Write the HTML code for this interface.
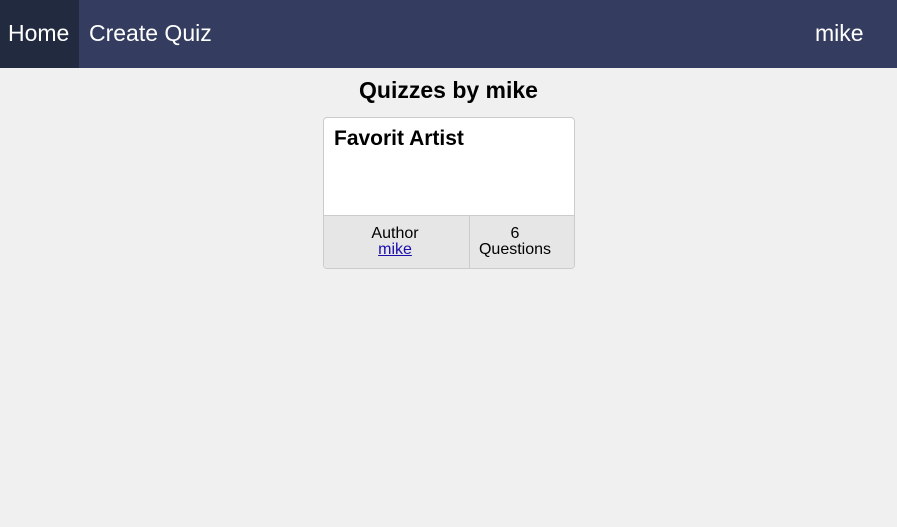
<!DOCTYPE html>
<html><head><style>
*{margin:0;padding:0;box-sizing:border-box}
body{width:897px;height:527px;background:#f0f0f0;font-family:"Liberation Sans",sans-serif;position:relative;overflow:hidden}
.nav{position:absolute;left:0;top:0;width:897px;height:68px;background:#343d60;color:#fff;font-size:23px}
.nav span{position:absolute;top:20px;line-height:26px}
.home{position:absolute;left:0;top:0;width:79px;height:68px;background:#222a3f}
h1{position:absolute;top:77px;width:897px;text-align:center;font-size:23px;font-weight:bold;line-height:26px}
.card{position:absolute;left:323px;top:117px;width:252px;height:152px;border:1px solid #ccc;border-radius:4px;background:#fff;overflow:hidden}
.card h2{position:absolute;left:10px;top:9px;font-size:21px;line-height:24px}
.foot{position:absolute;left:0;top:97px;width:250px;height:54px;background:#e6e6e6;border-top:1px solid #ccc;font-size:16px;line-height:16px;text-align:center}
.a{position:absolute;left:0;top:10px;width:142px}
.b{position:absolute;left:145px;top:0;height:54px;border-left:1px solid #ccc;width:105px;padding-top:10px;padding-right:14px}
a{color:#1a0dab}
</style></head><body>
<div class="nav"><div class="home"></div><span style="left:8px">Home</span><span style="left:89px">Create Quiz</span><span style="left:815px">mike</span></div>
<h1>Quizzes by mike</h1>
<div class="card"><h2>Favorit Artist</h2>
<div class="foot"><div class="a">Author<br><a href="#">mike</a></div><div class="b">6<br>Questions</div></div></div>
</body></html>
